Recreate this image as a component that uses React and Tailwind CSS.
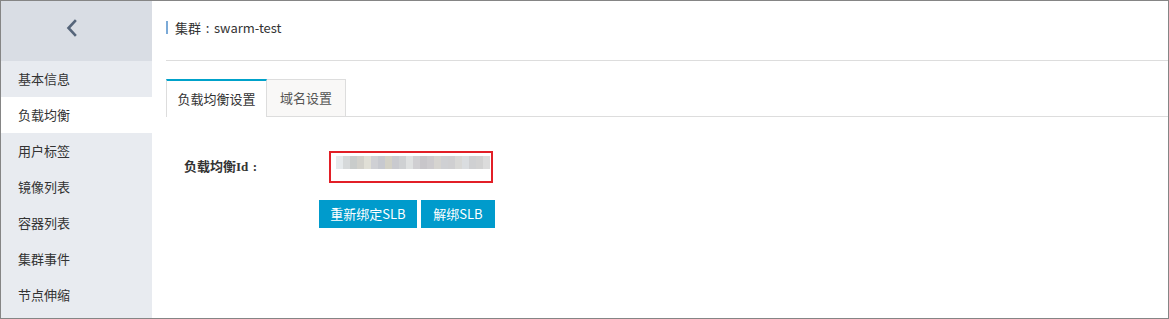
const MENU = ['基本信息', '负载均衡', '用户标签', '镜像列表', '容器列表', '集群事件', '节点伸缩']

const BLUR = [
  '#e6eaec', '#d6d9da', '#c9cccb', '#d2d1cb', '#e0dfd6', '#cfd0d4', '#c7c9cf', '#d3d1c6',
  '#c9cacf', '#cfd1d3', '#dfe1e1', '#d0cfd2', '#c8c6ca', '#cdcbce', '#d6d4d0', '#cfd0d3',
  '#cfcfd1', '#d8d8d6', '#dadde0', '#cfd0d2', '#d2d2d2', '#dcdcdc',
]

const font = { fontFamily: '"Noto Sans CJK SC", "Liberation Sans", sans-serif' }

function Colon() {
  return <span className="inline-block w-[13px] text-center">:</span>
}

export default function App() {
  return (
    <div
      className="w-[1169px] h-[319px] border border-[#858585] flex bg-white text-[#333] text-[13px]"
      style={font}
    >
      {/* Sidebar */}
      <div className="w-[151px] bg-[#e8ebf0] flex flex-col">
        <div className="h-[60px] bg-[#d9dde4] flex items-center justify-center">
          <svg width="14" height="20" viewBox="0 0 14 20" className="-ml-[10px] -mt-[6px]">
            <path d="M10 3 L3.5 10 L10 17" fill="none" stroke="#56657a" strokeWidth="2.6" strokeLinecap="square" />
          </svg>
        </div>
        {MENU.map((m, i) => (
          <div
            key={m}
            className={`h-[36px] flex items-center pl-[17px] ${i === 1 ? 'bg-white' : ''}`}
          >
            {m}
          </div>
        ))}
      </div>

      {/* Main */}
      <div className="flex-1 pl-[14px] flex flex-col">
        <div className="h-[60px] border-b border-[#dddddd] flex items-center pb-[6px]">
          <span className="w-[2px] h-[13px] bg-[#7baad7] mr-[7px]" />
          <span>
            集群<Colon />swarm-test
          </span>
        </div>

        {/* Tabs */}
        <div className="mt-[18px] h-[38px] flex border-b border-[#dddddd]">
          <div className="w-[101px] h-[38px] -mb-px bg-white border-t-2 border-t-[#00a2ca] border-x border-x-[#dddddd] flex items-center justify-center">
            负载均衡设置
          </div>
          <div className="w-[79px] h-[37px] bg-[#f9f8f7] border-t border-r border-[#dddddd] flex items-center justify-center text-[#555]">
            域名设置
          </div>
        </div>

        {/* Form */}
        <div className="pl-[18px] pt-[34px] flex items-center">
          <div
            className="w-[145px] font-bold text-[#333]"
            style={{ fontFamily: '"Liberation Serif", "Noto Sans CJK SC", serif' }}
          >
            负载均衡Id<Colon />
          </div>
          <div className="w-[164px] h-[32px] border-2 border-[#e21f27] flex items-start pl-[5px] pt-[3px]">
            <div className="flex h-[13px] blur-[0.6px]">
              {BLUR.map((c, i) => (
                <span key={i} className="w-[7px] h-[13px]" style={{ background: c }} />
              ))}
            </div>
          </div>
        </div>

        <div className="pl-[153px] mt-[17px] flex gap-[4px]">
          <button className="w-[98px] h-[28px] bg-[#009bcc] text-white text-[13px]">重新绑定SLB</button>
          <button className="w-[74px] h-[28px] bg-[#009bcc] text-white text-[13px]">解绑SLB</button>
        </div>
      </div>
    </div>
  )
}
